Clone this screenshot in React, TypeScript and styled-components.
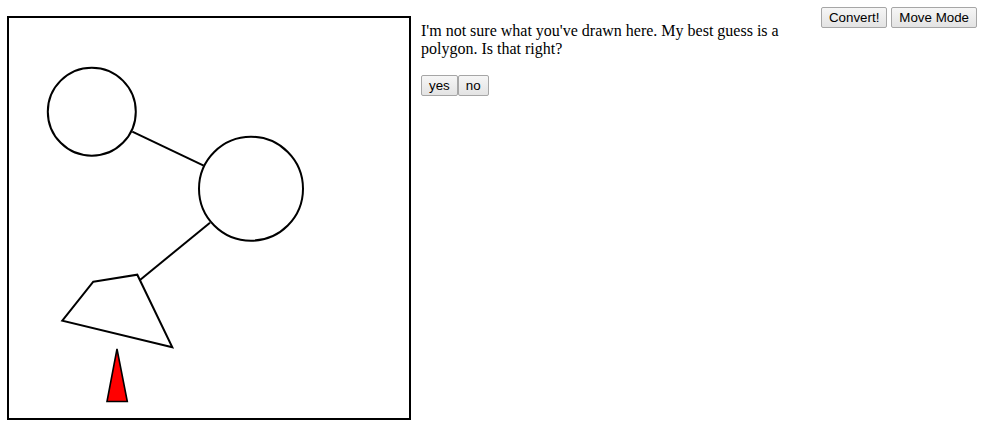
import React from "react";
import styled, { createGlobalStyle } from "styled-components";

const Global = createGlobalStyle`
  html, body { margin: 0; padding: 0; background: #fff; }
  body { font-family: "Liberation Serif", "Times New Roman", serif; font-size: 16px; color: #000; }
`;

const Page = styled.div`
  display: flex;
  align-items: flex-start;
  width: 984px;
  height: 429px;
  box-sizing: border-box;
  padding: 0 7px;
`;

const CanvasBox = styled.div`
  flex: none;
  width: 400px;
  height: 400px;
  margin-top: 16px;
  border: 2px solid #000;
  background: #fff;
  svg { display: block; }
`;

const Side = styled.div`
  flex: 1;
  min-width: 0;
  margin-left: 10px;
  padding-top: 22px;
`;

const Message = styled.p`
  margin: 0 0 17px;
  line-height: normal;
`;

const Answers = styled.div`
  display: flex;
`;

const Toolbar = styled.div`
  flex: none;
  display: flex;
  gap: 4px;
  margin-top: 7px;
`;

const Button = styled.button`
  font-family: "Liberation Sans", Arial, sans-serif;
  font-size: 13.333px;
  line-height: 15px;
  color: #000;
  padding: 2px 7px;
  border: 1px solid #a6a6a6;
  border-radius: 2px;
  background: linear-gradient(#f6f6f6, #e3e3e3);
  cursor: pointer;
`;

export default function App() {
  return (
    <>
      <Global />
      <Page>
        <CanvasBox>
          <svg width="400" height="400" viewBox="0 0 400 400">
            <g stroke="#000" strokeWidth="2" fill="none">
              <line x1="123.3" y1="113.7" x2="194.7" y2="147.7" />
              <line x1="201" y1="204.7" x2="131" y2="262" />
              <circle cx="82.8" cy="93.7" r="44" fill="#fff" />
              <circle cx="242" cy="170.7" r="52" fill="#fff" />
              <polygon points="84.3,263.7 128.3,256.7 163.3,329.3 53.3,302.7" />
            </g>
            <polygon
              points="108,331 98,383.5 118.3,383.5"
              fill="#ff0000"
              stroke="#000"
              strokeWidth="1.6"
            />
          </svg>
        </CanvasBox>
        <Side>
          <Message>
            I'm not sure what you've drawn here. My best guess is a polygon. Is that right?
          </Message>
          <Answers>
            <Button>yes</Button>
            <Button>no</Button>
          </Answers>
        </Side>
        <Toolbar>
          <Button>Convert!</Button>
          <Button>Move Mode</Button>
        </Toolbar>
      </Page>
    </>
  );
}
